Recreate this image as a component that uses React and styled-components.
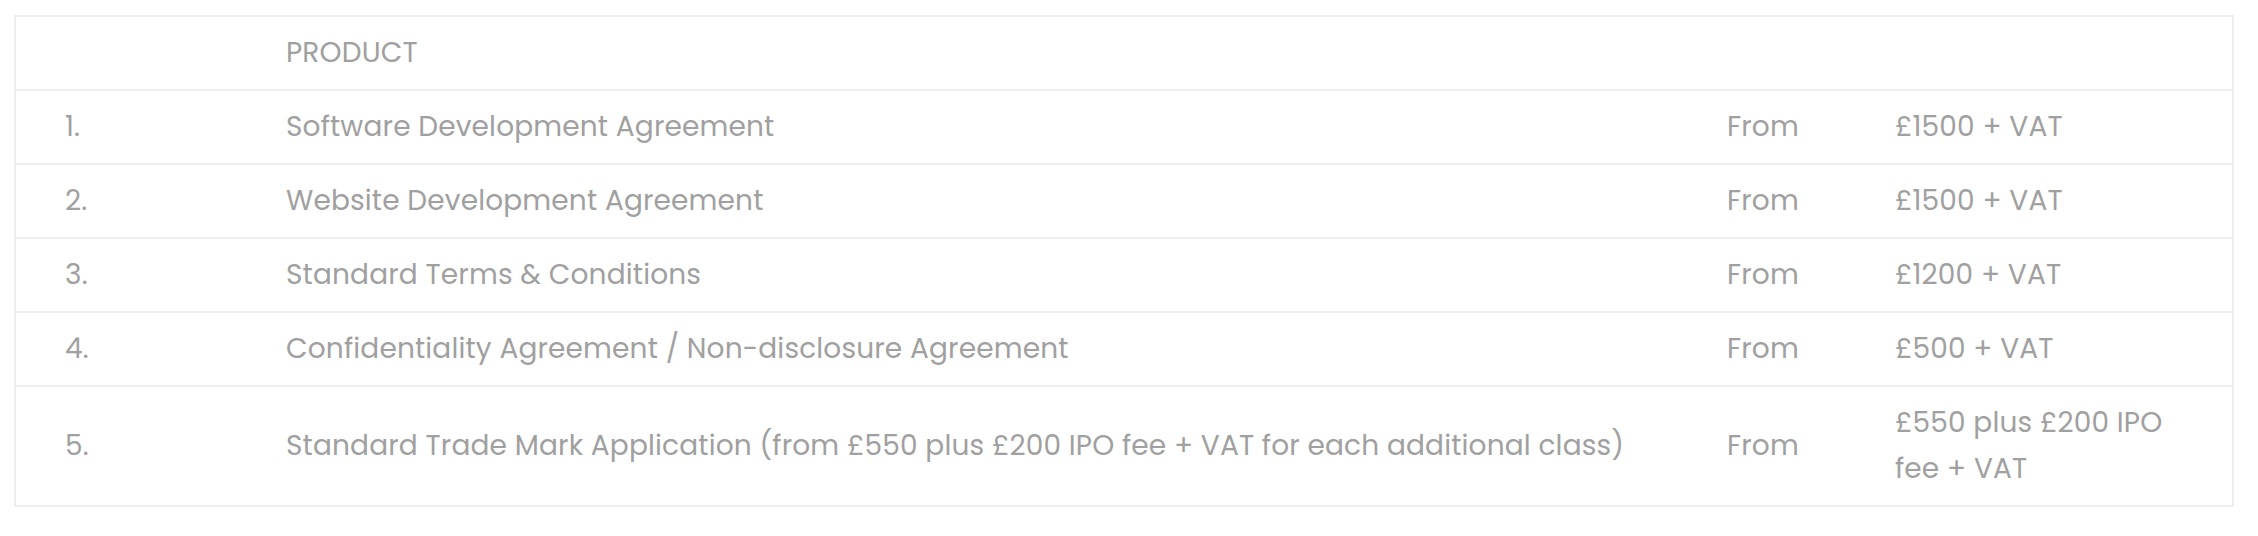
import React from "react";
import styled, { createGlobalStyle } from "styled-components";

const GlobalStyle = createGlobalStyle`
  html, body {
    margin: 0;
    padding: 0;
    background: #ffffff;
  }
  body {
    font-family: "Poppins", "DejaVu Sans", sans-serif;
  }
`;

const Page = styled.div`
  padding: 15px 24px 30px 14px;
`;

const Table = styled.div`
  border: 2px solid #eeeeee;
  font-family: "Poppins", "DejaVu Sans", sans-serif;
  font-size: 28px;
  line-height: 46px;
  color: #a0a0a0;
  letter-spacing: 0.15px;
`;

const Row = styled.div`
  display: grid;
  grid-template-columns: 221px 1441px 168px 1fr;
  align-items: center;
  padding: 13px 0 13px 35px;
  border-bottom: ${(p) => (p.$last ? "none" : "2px solid #eeeeee")};
`;

const Cell = styled.div`
  padding: 0 14px;
  text-transform: ${(p) => (p.$upper ? "uppercase" : "none")};
`;

const Price = styled.div`
  padding: 0 14px;
  max-width: 300px;
`;

const rows = [
  ["1.", "Software Development Agreement", "From", "£1500 + VAT"],
  ["2.", "Website Development Agreement", "From", "£1500 + VAT"],
  ["3.", "Standard Terms & Conditions", "From", "£1200 + VAT"],
  ["4.", "Confidentiality Agreement / Non-disclosure Agreement", "From", "£500 + VAT"],
  [
    "5.",
    "Standard Trade Mark Application (from £550 plus £200 IPO fee + VAT for each additional class)",
    "From",
    "£550 plus £200 IPO fee + VAT",
  ],
];

export default function App() {
  return (
    <>
      <GlobalStyle />
      <Page>
        <Table>
          <Row>
            <Cell />
            <Cell $upper>Product</Cell>
            <Cell />
            <Cell />
          </Row>
          {rows.map((r, i) => (
            <Row key={i} $last={i === rows.length - 1}>
              <Cell>{r[0]}</Cell>
              <Cell>{r[1]}</Cell>
              <Cell>{r[2]}</Cell>
              <Price>{r[3]}</Price>
            </Row>
          ))}
        </Table>
      </Page>
    </>
  );
}
